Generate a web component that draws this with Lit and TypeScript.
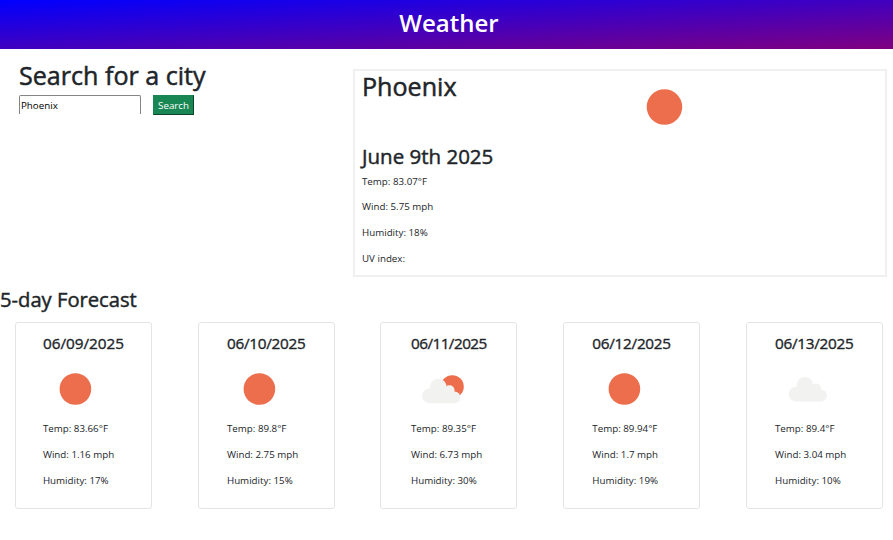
import { LitElement, html, css, svg } from "lit";
import { customElement, property } from "lit/decorators.js";
import { styleMap } from "lit/directives/style-map.js";

type Sky = "clear" | "few" | "clouds";

interface Day {
  date: string;
  sky: Sky;
  temp: string;
  wind: string;
  humidity: string;
}

const DAYS: Day[] = [
  { date: "06/09/2025", sky: "clear", temp: "83.66", wind: "1.16", humidity: "17" },
  { date: "06/10/2025", sky: "clear", temp: "89.8", wind: "2.75", humidity: "15" },
  { date: "06/11/2025", sky: "few", temp: "89.35", wind: "6.73", humidity: "30" },
  { date: "06/12/2025", sky: "clear", temp: "89.94", wind: "1.7", humidity: "19" },
  { date: "06/13/2025", sky: "clouds", temp: "89.4", wind: "3.04", humidity: "10" },
];

// Dates with narrow "1" digits are set slightly tighter.
const tracking = (date: string) => ({
  letterSpacing: `${-0.27 * (date.split("1").length - 1)}px`,
});

const cloud = svg`<g fill="#f2f2f1">
  <circle cx="18.3" cy="38.9" r="7.3"/>
  <circle cx="27.3" cy="30.2" r="8.4"/>
  <circle cx="38.5" cy="33.4" r="5.1"/>
  <circle cx="43.6" cy="40.4" r="5.8"/>
  <path d="M18.3 46.2V33H38L43.6 38V46.2Z"/>
</g>`;

@customElement("sky-icon")
export class SkyIcon extends LitElement {
  @property() sky: Sky = "clear";

  static styles = css`
    :host { display: block; width: 64px; height: 64px; }
    .icon { display: block; width: 100%; height: 100%; }
  `;

  render() {
    return html`<svg class="icon" viewBox="0 0 64 64">
      ${this.sky === "clear" ? svg`<circle cx="32.4" cy="32" r="15.8" fill="#ec6e4c"/>` : null}
      ${this.sky === "few" ? svg`<circle cx="41.3" cy="29.7" r="11.5" fill="#ec6e4c"/>${cloud}` : null}
      ${this.sky === "clouds" ? svg`<g transform="translate(2.6 -1.8)">${cloud}</g>` : null}
    </svg>`;
  }
}

@customElement("app-root")
export class AppRoot extends LitElement {
  static styles = css`
    :host {
      display: block;
      height: 540px;
      overflow: hidden;
      background: #fff;
      color: #212529;
      font: 400 9.75px/15.4px "Open Sans", "Noto Sans", sans-serif;
    }
    * { box-sizing: border-box; }
    h1, h2, h3, h4, p { margin: 0; white-space: nowrap; }
    .header {
      height: 49px;
      padding-top: 7px;
      background: linear-gradient(to bottom right, blue, purple);
      color: #fff;
      text-align: center;
    }
    .brand { font-size: 24px; font-weight: 600; line-height: 32px; padding-left: 5px; }
    .top { display: flex; height: 228px; }
    .search { width: 353px; padding: 11px 0 0 19px; }
    .title { font-size: 25.1px; font-weight: 400; line-height: 31px; -webkit-text-stroke: 0.5px currentColor; }
    .form { display: flex; gap: 12px; margin-top: 4px; }
    .field {
      width: 122px;
      height: 19px;
      padding: 1px 1px 0;
      border: 1px solid #858585;
      border-bottom: 0;
      border-radius: 2px 2px 0 0;
      background: #fff;
      color: #000;
      font: inherit;
      outline: none;
    }
    .go {
      width: 41px;
      height: 20px;
      padding: 1px 0 0;
      border: 1px solid #198754;
      border-color: #198754 #0d432a #0d432a #198754;
      background: #198754;
      color: #fff;
      font: inherit;
    }
    .current {
      width: 534px;
      height: 208px;
      margin-top: 20px;
      padding: 0 7px;
      border: 2px solid #eff0f0;
    }
    .city { display: flex; height: 72px; }
    .name { width: 266px; line-height: 31px; }
    .now { width: 72px; height: 72px; }
    .date { font-size: 20.5px; font-weight: 400; line-height: 26px; margin-bottom: 4.6px; -webkit-text-stroke: 0.45px currentColor; }
    .line { margin-bottom: 10.3px; }
    .heading { height: 45px; padding-top: 10px; font-size: 20.2px; font-weight: 400; line-height: 25px; -webkit-text-stroke: 0.45px currentColor; }
    .days { display: flex; gap: 45.7px; padding-left: 15px; }
    .card {
      display: flex;
      justify-content: center;
      flex: none;
      width: 137px;
      height: 187px;
      padding-top: 11px;
      border: 1px solid #e4e4e5;
      border-radius: 3px;
    }
    .day { font-size: 15.3px; font-weight: 400; line-height: 19px; margin-bottom: 3.6px; -webkit-text-stroke: 0.35px currentColor; }
    .day + sky-icon + .line { padding-top: 0.4px; }
    .card .line { margin-bottom: 10.5px; }
  `;

  render() {
    return html`
      <header class="header"><h1 class="brand">Weather</h1></header>
      <section class="top">
        <div class="search">
          <h1 class="title">Search for a city</h1>
          <div class="form">
            <input class="field" .value=${"Phoenix"} />
            <button class="go">Search</button>
          </div>
        </div>
        <div class="current">
          <div class="city">
            <h1 class="title name">Phoenix</h1>
            <sky-icon class="now" sky="clear"></sky-icon>
          </div>
          <h2 class="date">June 9th 2025</h2>
          <p class="line">Temp: 83.07°F</p>
          <p class="line">Wind: 5.75 mph</p>
          <p class="line">Humidity: 18%</p>
          <p class="line">UV index:</p>
        </div>
      </section>
      <h2 class="heading">5-day Forecast</h2>
      <section class="days">
        ${DAYS.map((d) => html`
          <article class="card">
            <div>
              <h4 class="day" style=${styleMap(tracking(d.date))}>${d.date}</h4>
              <sky-icon sky=${d.sky}></sky-icon>
              <p class="line">Temp: ${d.temp}°F</p>
              <p class="line">Wind: ${d.wind} mph</p>
              <p class="line">Humidity: ${d.humidity}%</p>
            </div>
          </article>`)}
      </section>
    `;
  }
}
